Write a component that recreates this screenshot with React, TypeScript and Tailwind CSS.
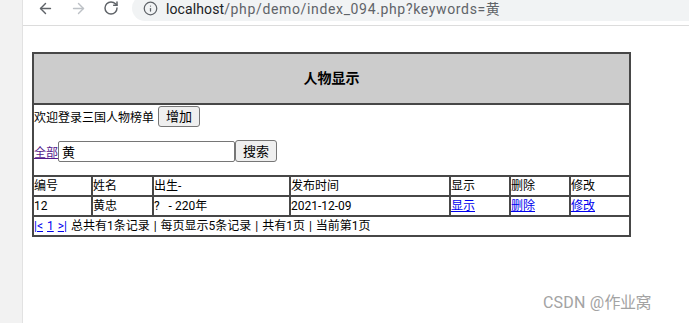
import React from "react";
import { ArrowLeft, ArrowRight, RotateCw, Info } from "lucide-react";

const cell = "border-l-2 border-t-2 border-[#474747] px-0 leading-[18px] whitespace-pre";
const lastCell = "border-x-2 border-t-2 border-[#474747] px-0 leading-[18px] whitespace-pre";
const link = "text-[#0000ee] underline";

const headers = ["编号", "姓名", "出生-", "发布时间", "显示", "删除", "修改"];

const App: React.FC = () => {
  return (
    <div className="relative flex w-[689px] h-[323px] overflow-hidden bg-white">
      {/* left edge of the browser window */}
      <div className="w-[23px] h-full bg-[#f2f2f2] border-r border-[#e2e2e2] shrink-0" />

      <div className="flex flex-col flex-1 min-w-0">
        {/* toolbar */}
        <div className="h-[26px] border-b border-[#dcdcdc] flex items-start overflow-hidden shrink-0">
          <div className="flex items-center h-[16px] ml-[14px] gap-[16px] text-[#5f6368]">
            <ArrowLeft size={17} strokeWidth={2} />
            <ArrowRight size={17} strokeWidth={2} className="text-[#bdc1c6]" />
            <RotateCw size={16} strokeWidth={2.2} />
          </div>
          <div className="ml-[13px] -mt-[5px] h-[26px] flex-1 -mr-[40px] rounded-full bg-[#f1f3f4] flex items-center pl-[11px]">
            <Info size={15} strokeWidth={2} className="text-[#5f6368]" />
            <span className="ml-[8px] mt-[2px] text-[14px] font-['Roboto','Noto_Sans_CJK_SC',sans-serif] whitespace-nowrap">
              <span className="text-[#202124] tracking-[0.1px]">localhost</span>
              <span className="text-[#5f6368] tracking-[0.65px]">/php/demo/index_094.php?keywords=黄</span>
            </span>
          </div>
        </div>

        {/* page */}
        <div className="pt-[26px] pl-[9px] text-[12px] text-black font-['Roboto','Noto_Sans_CJK_SC',sans-serif]">
          <div className="grid grid-cols-[59px_61px_137px_160px_60px_60px_62px] w-[599px]">
            <div className="col-span-7 h-[51px] border-x-2 border-t-2 border-[#474747] bg-[#cccccc] flex items-center justify-center text-[14px] font-bold">
              人物显示
            </div>

            <div className="col-span-7 h-[72px] border-x-2 border-t-2 border-[#474747] flex flex-col">
              <div className="flex items-center mt-[1px] h-[21px]">
                <span className="mt-[3px]">欢迎登录三国人物榜单</span>
                <button className="ml-[4px] h-[21px] px-[7px] border border-[#767676] rounded-[3px] bg-[#efefef] text-[13px] leading-none">
                  增加
                </button>
              </div>
              <div className="flex items-center mt-[13px] h-[22px]">
                <a className="text-[#551a8b] underline mt-[4px]">全部</a>
                <input
                  readOnly
                  value="黄"
                  className="w-[177px] h-[21px] border border-[#767676] rounded-[2px] px-[3px] text-[13px] outline-none"
                />
                <button className="h-[22px] px-[7px] border border-[#767676] rounded-[3px] bg-[#efefef] text-[13px] leading-none">
                  搜索
                </button>
              </div>
            </div>

            {headers.map((h, i) => (
              <div key={h} className={`${i === 6 ? lastCell : cell} h-[20px]`}>
                {h}
              </div>
            ))}

            <div className={`${cell} h-[20px]`}>12</div>
            <div className={`${cell} h-[20px]`}>黄忠</div>
            <div className={`${cell} h-[20px]`}>{"?   - 220年"}</div>
            <div className={`${cell} h-[20px]`}>2021-12-09</div>
            <div className={`${cell} h-[20px]`}>
              <a className={link}>显示</a>
            </div>
            <div className={`${cell} h-[20px]`}>
              <a className={link}>删除</a>
            </div>
            <div className={`${lastCell} h-[20px]`}>
              <a className={link}>修改</a>
            </div>

            <div className="col-span-7 h-[22px] border-2 border-[#474747] leading-[18px] whitespace-pre [word-spacing:1px]">
              <a className={link}>|&lt;</a> <a className={link}>1</a> <a className={link}>&gt;|</a>
              {" 总共有1条记录 | 每页显示5条记录 | 共有1页 | 当前第1页"}
            </div>
          </div>
        </div>
      </div>

      {/* watermark */}
      <div className="absolute left-[543px] top-[291px] text-[16px] text-[#a3a3a3] font-['Roboto','Noto_Sans_CJK_SC',sans-serif]">
        <span className="tracking-[0.2px]">CSDN @</span>
        <span className="tracking-[-0.5px]">作业窝</span>
      </div>
    </div>
  );
};

export default App;
